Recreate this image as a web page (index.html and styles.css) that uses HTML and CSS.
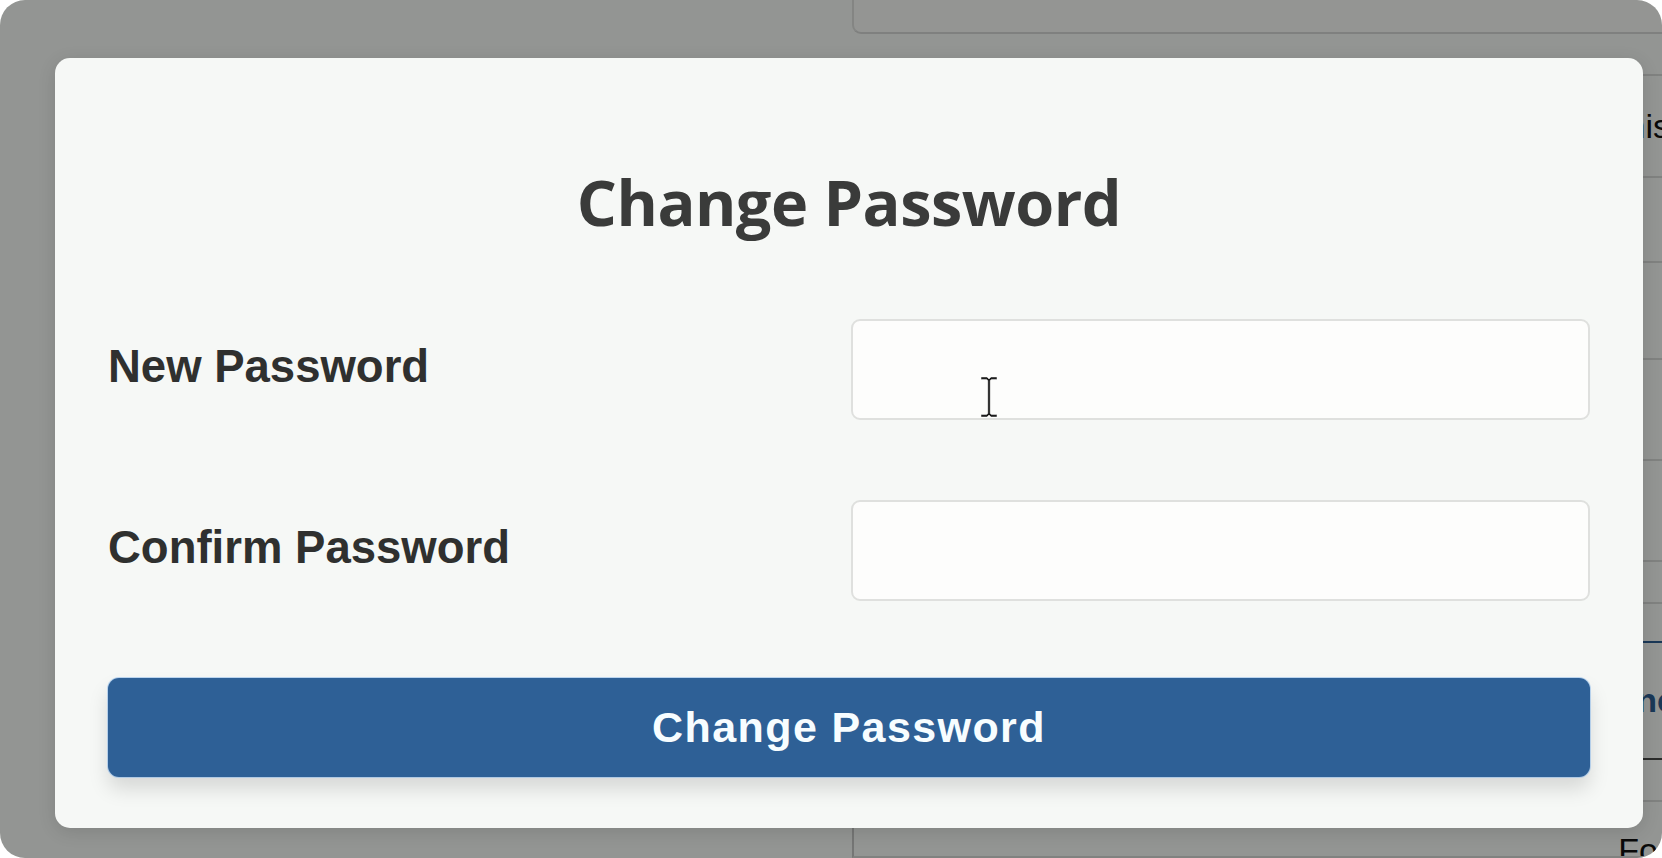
FILE: index.html
```html
<!DOCTYPE html>
<html lang="en">
<head>
<meta charset="utf-8">
<title>Change Password</title>
<link rel="stylesheet" href="styles.css">
</head>
<body>
<div class="frame">
  <div class="page">
    <aside class="side"></aside>
    <main class="main">
      <div class="topcard"></div>
      <div class="table">
        <div class="row"></div>
        <div class="row"><span class="cell">This</span></div>
        <div class="row"></div>
        <div class="row"></div>
        <div class="row"></div>
        <div class="row"></div>
        <div class="row"></div>
        <div class="row row-blue"></div>
        <div class="row row-dark"><span class="cell cell-blue">Sync</span></div>
        <div class="row"></div>
        <div class="row"><span class="cell cell-low">Fo</span></div>
      </div>
    </main>
  </div>

  <div class="overlay">
    <div class="modal">
      <h1 class="title">Change Password</h1>
      <form class="form">
        <div class="field">
          <label class="label" for="np">New Password</label>
          <input class="input" id="np" type="password">
        </div>
        <div class="field">
          <label class="label" for="cp">Confirm Password</label>
          <input class="input" id="cp" type="password">
        </div>
        <button class="btn" type="button">Change Password</button>
      </form>
    </div>
  </div>

  <svg class="ibeam" width="18" height="42" viewBox="0 0 18 42">
    <path d="M1 1 h6 l2 2 l2 -2 h6 v2.4 h-5.6 l-1.2 1 v33.2 l1.2 1 h5.6 v2.4 h-6 l-2 -2 l-2 2 h-6 v-2.4 h5.6 l1.2 -1 v-33.2 l-1.2 -1 h-5.6 z" fill="#111" stroke="#fff" stroke-width="0.5"/>
  </svg>
</div>
</body>
</html>
```

FILE: styles.css
```css
* { box-sizing: border-box; }

html, body {
  margin: 0;
  padding: 0;
  background: #ffffff;
}

body {
  font-family: "Liberation Sans", Arial, sans-serif;
}

.frame {
  position: relative;
  width: 1662px;
  height: 858px;
  border-radius: 25px;
  overflow: hidden;
  background: #fcfffb;
}

/* underlying page (dimmed by the overlay) */
.page {
  display: flex;
  height: 100%;
}

.side {
  width: 852px;
  flex: none;
}

.main {
  flex: 1;
  display: flex;
  flex-direction: column;
}

.topcard {
  height: 34px;
  flex: none;
  border-left: 2px solid #e2e4e1;
  border-bottom: 2px solid #dadcd9;
  border-bottom-left-radius: 9px;
  background: #fdfffc;
}

.table {
  flex: 1;
  display: grid;
  grid-template-rows: 42px 102px 85px 97px 101px 101px 42px 39px 117px 42px 1fr;
}

.row {
  border-bottom: 2px solid #dcdedb;
  display: flex;
  align-items: center;
  justify-content: flex-end;
  overflow: hidden;
}

.row:nth-child(n+3) {
  border-left: 2px solid #c9cbc8;
}

.row-blue {
  border-bottom: 2px solid #2e6096;
}

.row-dark {
  border-bottom: 2px solid #4a4c4a;
}

.cell {
  font-size: 34px;
  color: #111;
  white-space: nowrap;
  margin-right: -8px;
}

.cell-blue {
  color: #2e6096;
  font-weight: 700;
  margin-right: -14px;
}

.cell-low {
  align-self: flex-end;
  margin-right: 4px;
  margin-bottom: -14px;
}

/* overlay + modal */
.overlay {
  position: absolute;
  inset: 0;
  background: rgba(0, 0, 0, 0.415);
  padding: 58px 19px 30px 55px;
}

.modal {
  width: 1588px;
  height: 770px;
  background: #f6f8f6;
  border-radius: 15px;
  box-shadow: 0 4px 18px rgba(0, 0, 0, 0.12);
  padding: 106px 53px 52px 53px;
  display: flex;
  flex-direction: column;
}

.title {
  margin: 0 0 79px 0;
  font-family: "Open Sans", "Noto Sans", sans-serif;
  font-weight: 700;
  font-size: 63px;
  line-height: 1.2;
  height: 76px;
  letter-spacing: -0.5px;
  color: #3a3b3a;
  text-align: center;
}

.form {
  display: flex;
  flex-direction: column;
}

.field {
  display: grid;
  grid-template-columns: 1fr 1fr;
  gap: 4px;
  align-items: center;
}

.field + .field {
  margin-top: 80px;
}

.label {
  font-family: "Liberation Sans", Arial, sans-serif;
  font-weight: 700;
  font-size: 45.5px;
  color: #2f302f;
  padding-bottom: 5px;
}

.input {
  height: 101px;
  width: 100%;
  border: 2px solid #dfe0de;
  border-radius: 9px;
  background: #fdfdfc;
  outline: none;
  font-size: 30px;
}

.btn {
  margin-top: 77px;
  height: 99px;
  width: 100%;
  border: none;
  border-radius: 11px;
  background: #2e6096;
  color: #f7fdff;
  font-family: "Liberation Sans", Arial, sans-serif;
  font-weight: 700;
  font-size: 43px;
  letter-spacing: 1.4px;
  box-shadow: 0 0 0 1px rgba(140, 185, 235, 0.55), 0 12px 20px rgba(0, 0, 0, 0.13);
  cursor: pointer;
}

.ibeam {
  position: absolute;
  left: 980px;
  top: 376px;
}
```
